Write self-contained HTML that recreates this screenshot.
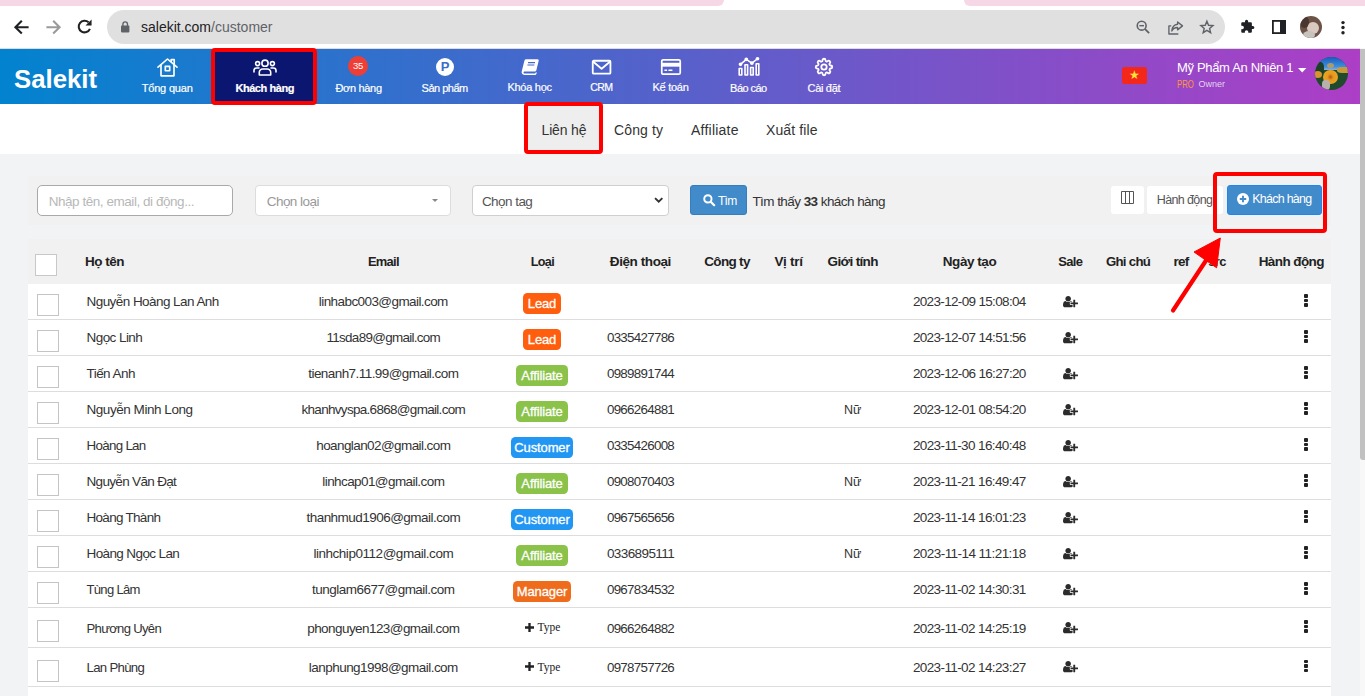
<!DOCTYPE html>
<html lang="vi">
<head>
<meta charset="utf-8">
<title>Salekit - Khách hàng</title>
<style>
*{box-sizing:border-box;margin:0;padding:0}
html,body{width:1365px;height:696px;overflow:hidden;background:#f1f3f5;font-family:"Liberation Sans",sans-serif;color:#222}
.abs{position:absolute}
svg{display:block;position:absolute;overflow:visible}
#tabstrip{left:0;top:0;width:724px;height:6px;background:#f6d7e6;border-radius:0 0 6px 0}
#tabactive{left:964px;top:0;width:401px;height:6px;background:#f6d7e6;border-radius:0 0 0 6px}
#chrome{left:0;top:0;width:1365px;height:49px;background:#fff;border-bottom:1px solid #dedbd8}
#urlpill{left:107px;top:10px;width:1118px;height:34px;border-radius:17px;background:#e0e0e0}
#url{left:141px;top:18px;font-size:14px;line-height:18px;color:#202124;white-space:nowrap}
#url span{color:#5f6368}
#nav{left:0;top:49px;width:1360px;height:55px;background:linear-gradient(90deg,#0283cf 0%,#ad3ec6 100%)}
#sbar{left:1360px;top:48px;width:5px;height:648px;background:#f8f8f8}
#sthumb{left:1360.200px;top:48.500px;width:6px;height:411.500px;background:#c1c1c1;border-radius:0 0 0 3px}
.nl{position:absolute;top:81px;font-size:11px;line-height:14px;color:#fff;white-space:nowrap;transform:translateX(-50%);-webkit-text-stroke:.2px #fff}
#subnav{left:0;top:104px;width:1360px;height:50px;background:#fff}
.st{position:absolute;top:121px;font-size:14px;line-height:18px;color:#333;white-space:nowrap}
.redbox{position:absolute;border:4px solid #ff0000;border-radius:4px}
.panel{position:absolute;left:28px;width:1303px;background:#f1f1f1}
.th{position:absolute;top:252.7px;font-size:13.5px;line-height:18px;font-weight:bold;color:#222;white-space:nowrap;transform:translateX(-50%)}
.row{position:absolute;left:28px;width:1303px;background:#fff;border-bottom:1px solid #ddd}
.cb{position:absolute;left:9px;width:22px;height:22px;border:1px solid #c4c4c4;background:#fff}
.c{position:absolute;font-size:13.5px;line-height:16px;color:#333;white-space:nowrap;transform:translateX(-50%)}
.nm{position:absolute;left:58.5px;font-size:13.5px;line-height:16px;color:#333;white-space:nowrap}
.bd{position:absolute;top:9px;height:20.7px;border-radius:4.5px;color:#fff;font-size:13px;line-height:22.6px;letter-spacing:-.12px;-webkit-text-stroke:.3px #fff;text-align:center;left:514px;transform:translateX(-50%)}
.lead{background:#ff5e0e;width:38px}
.aff{background:#8bc34a;width:52px}
.cus{background:#2196f3;width:62px}
.man{background:#ef6c1c;width:58px}
.ty{position:absolute;left:496.5px;width:40px;height:16px}
.ty svg{left:0;top:3.5px;width:9px;height:9px}
.ty span{position:absolute;left:13px;top:0;font-family:"Liberation Serif",serif;font-size:11.5px;line-height:16px;color:#222}
.upw{position:absolute;left:1034.800px;width:15px;height:13.100px}
.up{left:0;top:0;width:15px;height:13.100px}
.dots{position:absolute;left:1276.300px;width:4px}
.dots i{display:block;width:3.400px;height:3.300px;background:#222;margin-bottom:1.200px;border-radius:.9px}
.ft{font-size:13.5px;line-height:16px;white-space:nowrap}
.ft2{font-size:13.5px;line-height:16px;white-space:nowrap;color:#333}

#f1{letter-spacing:-0.175px}
#f2{letter-spacing:-0.439px}
#f3{letter-spacing:-0.330px}
#f4{letter-spacing:-0.494px}
#f5{letter-spacing:-0.283px}
#f6{letter-spacing:-0.700px;font-size:10.55px!important}
#f7{letter-spacing:-0.256px}
#f8{letter-spacing:-0.545px}
#f9{letter-spacing:-0.310px}
#f10{letter-spacing:-0.331px}
#f11{letter-spacing:-0.156px}
#f12{letter-spacing:0.125px}
#f13{letter-spacing:0.230px}
#f14{letter-spacing:0.113px}
#f15{letter-spacing:-0.454px}
#f16{letter-spacing:-0.531px}
#f17{letter-spacing:-0.544px}
#f18{letter-spacing:-0.700px;font-size:12.08px!important}
#f19{letter-spacing:-0.560px}
#f20{letter-spacing:-0.622px}
#f21{letter-spacing:-0.700px;font-size:12.43px!important}
#f22{letter-spacing:-0.500px}
#f23{letter-spacing:-0.700px;font-size:12.91px!important}
#f24{letter-spacing:-0.700px;font-size:12.61px!important}
#f25{letter-spacing:-0.418px}
#f26{letter-spacing:-0.692px}
#f27{letter-spacing:-0.263px}
#f28{letter-spacing:-0.649px}
#f29{letter-spacing:-0.459px}
#f30{letter-spacing:-0.700px;font-size:12.97px!important}
#f31{letter-spacing:-0.700px;font-size:13.19px!important}
#f32{letter-spacing:-0.700px;font-size:13.47px!important}
#f33{letter-spacing:-0.700px;font-size:12.92px!important}
#f34{letter-spacing:-0.587px}
#f35{letter-spacing:-0.557px}
#f36{letter-spacing:-0.580px}
#f37{letter-spacing:-0.665px}
#f38{letter-spacing:-0.562px}
#f39{letter-spacing:-0.700px;font-size:13.45px!important}
#f40{letter-spacing:-0.700px;font-size:13.33px!important}
#f41{letter-spacing:-0.665px}
#f42{letter-spacing:-0.557px}
#f43{letter-spacing:-0.563px}
#f44{letter-spacing:-0.700px;font-size:13.33px!important}
#f45{letter-spacing:-0.665px}
#f46{letter-spacing:-0.455px}
#f47{letter-spacing:-0.700px;font-size:13.5px!important}
#f48{letter-spacing:-0.700px;font-size:13.33px!important}
#f49{letter-spacing:-0.665px}
#f50{letter-spacing:-0.700px;font-size:13.36px!important}
#f51{letter-spacing:-0.584px}
#f52{letter-spacing:-0.700px;font-size:13.33px!important}
#f53{letter-spacing:-0.609px}
#f54{letter-spacing:-0.675px}
#f55{letter-spacing:-0.579px}
#f56{letter-spacing:-0.700px;font-size:13.33px!important}
#f57{letter-spacing:-0.609px}
#f58{letter-spacing:-0.700px;font-size:13.49px!important}
#f59{letter-spacing:-0.529px}
#f60{letter-spacing:-0.700px;font-size:13.33px!important}
#f61{letter-spacing:-0.609px}
#f62{letter-spacing:-0.611px}
#f63{letter-spacing:-0.463px}
#f64{letter-spacing:-0.587px}
#f65{letter-spacing:-0.554px}
#f66{letter-spacing:-0.700px;font-size:13.08px!important}
#f67{letter-spacing:-0.519px}
#f68{letter-spacing:-0.700px;font-size:13.33px!important}
#f69{letter-spacing:-0.609px}
#f70{letter-spacing:-0.700px;font-size:13.11px!important}
#f71{letter-spacing:-0.565px}
#f72{letter-spacing:-0.700px;font-size:13.33px!important}
#f73{letter-spacing:-0.609px}
#f74{letter-spacing:-0.700px;font-size:13.21px!important}
#f75{letter-spacing:-0.539px}
#f76{letter-spacing:-0.700px;font-size:13.33px!important}
#f77{letter-spacing:-0.609px}
</style>
</head>
<body>
<div class="abs" id="chrome"></div><div class="abs" id="tabstrip"></div><div class="abs" id="tabactive"></div>
<div class="abs" id="urlpill"></div>
<svg style="left:13.5px;top:19.8px;width:15px;height:14.4px" viewBox="0 0 15 14.400" fill="none" stroke="#202124" stroke-width="2.1" stroke-linejoin="miter"><path d="M14.600 7.200H2M7.800 0.800L1.400 7.200L7.800 13.600"/></svg>
<svg style="left:45.800px;top:19.8px;width:15px;height:14.4px" viewBox="0 0 15 14.400" fill="none" stroke="#9a9a9a" stroke-width="2.1"><path d="M.4 7.200H13M7.200 0.800L13.600 7.200L7.200 13.600"/></svg>
<svg style="left:77.200px;top:19.400px;width:15.400px;height:15.400px" viewBox="0 0 15 15" fill="none"><path d="M12.600 9.600A5.700 5.700 0 1 1 11.300 3.200" stroke="#202124" stroke-width="2"/><path d="M14.200 .4V6.300H8.300z" fill="#202124"/></svg>
<svg style="left:120.800px;top:20.600px;width:8.400px;height:11.400px" viewBox="0 0 8.400 11.400"><rect x="0" y="4.600" width="8.400" height="6.800" rx=".8" fill="#5f6368"/><path d="M1.900 5V3.200a2.300 2.300 0 0 1 4.600 0V5" fill="none" stroke="#5f6368" stroke-width="1.400"/></svg>
<!-- zoom -->
<svg style="left:1136.2px;top:20.1px;width:14.2px;height:14.2px" viewBox="0 0 16 16" fill="none" stroke="#5f6368" stroke-width="1.800"><circle cx="6.400" cy="6.400" r="5"/><path d="M10.200 10.200L14.800 14.800" stroke-width="2.100"/><path d="M3.800 6.400H9" stroke-width="1.600"/></svg>
<!-- share -->
<svg style="left:1167.6px;top:20.6px;width:15.4px;height:13.6px" viewBox="0 0 17 15" fill="none" stroke="#5f6368" stroke-width="1.500" stroke-linejoin="round"><path d="M3.6 5.4H1V14.300H11.4"/><path d="M10.600 1L16 5.400L10.600 9.800V7.200C7.400 7.200 5.400 8.400 4.200 11C4.600 7 6.800 4 10.600 3.600z"/></svg>
<!-- star -->
<svg style="left:1200.2px;top:19.8px;width:13.8px;height:13.8px" viewBox="0 0 16 16" fill="none" stroke="#5f6368" stroke-width="1.650" stroke-linejoin="miter"><path d="M8 1.400L9.900 6.100L15 6.500L11.100 9.800L12.300 14.700L8 12.100L3.700 14.700L4.900 9.800L1 6.500L6.100 6.100z"/></svg>
<!-- puzzle -->
<svg style="left:1239.500px;top:19.200px;width:15px;height:15px" viewBox="0 0 24 24"><path d="M20.500 11H19V7c0-1.100-.9-2-2-2h-4V3.500a2.500 2.500 0 0 0-5 0V5H4c-1.100 0-2 .9-2 2v3.800h1.500c1.500 0 2.700 1.200 2.700 2.700S5 16.200 3.500 16.200H2V20c0 1.100.9 2 2 2h3.800v-1.500c0-1.500 1.200-2.700 2.700-2.700s2.700 1.200 2.700 2.700V22H17c1.100 0 2-.9 2-2v-4h1.500a2.500 2.500 0 0 0 0-5z" fill="#202124"/></svg>
<!-- side panel -->
<svg style="left:1272px;top:20px;width:14px;height:14px" viewBox="0 0 14 14"><rect x=".9" y=".9" width="12.200" height="12.200" fill="#fff" stroke="#202124" stroke-width="1.800"/><rect x="8" y="0" width="6" height="14" fill="#202124"/></svg>
<!-- avatar -->
<div class="abs" style="left:1300px;top:15.500px;width:22px;height:22px;border-radius:50%;overflow:hidden;background:#6b5348"><div class="abs" style="left:7px;top:6px;width:12px;height:12px;border-radius:50%;background:#d9c9c0"></div><div class="abs" style="left:3px;top:15px;width:12px;height:8px;border-radius:50%;background:#c9c3bd"></div><div class="abs" style="left:0;top:0;width:9px;height:12px;border-radius:50%;background:#4a3830"></div></div>
<!-- menu -->
<svg style="left:1341.200px;top:19.800px;width:4px;height:15px" viewBox="0 0 4 15" fill="#202124"><circle cx="2" cy="2.6" r="1.700"/><circle cx="2" cy="7.500" r="1.700"/><circle cx="2" cy="12.800" r="1.700"/></svg>

<div class="abs" id="url">salekit.com<span>/customer</span></div>
<div class="abs" id="nav"></div>
<div class="abs" style="left:215px;top:49px;width:98px;height:55px;background:#0b1670"></div>
<svg style="left:14px;top:62px;width:86px;height:30px" viewBox="0 0 86 30"><text id="logo" x="0" y="26.3" font-family="Liberation Sans, sans-serif" font-size="26" font-weight="bold" fill="#fff" textLength="83" lengthAdjust="spacingAndGlyphs">Salekit</text></svg>
<!-- home -->
<svg style="left:156.5px;top:57.5px;width:21px;height:19px" viewBox="0 0 21 19" fill="none" stroke="#fff" stroke-width="1.65" stroke-linejoin="round" stroke-linecap="round"><path d="M1 9.2L10.5 1L20 9.2"/><path d="M4 7.2V17.8H17V7.2"/><path d="M14.2 3.6V1.6H17.2V6.2"/><rect x="8.3" y="8.3" width="4.4" height="4.4"/></svg>
<div id="f1" class="nl" style="left:167.2px">Tổng quan</div>
<!-- people -->
<svg style="left:253px;top:58.5px;width:24px;height:17px" viewBox="0 0 24 17" fill="none" stroke="#fff" stroke-width="1.6" stroke-linecap="round" stroke-linejoin="round"><circle cx="12" cy="4.2" r="3.1"/><circle cx="4.6" cy="4.6" r="2"/><circle cx="19.4" cy="4.6" r="2"/><path d="M6.3 16V13.3a3.3 3.3 0 0 1 3.3-3.3h4.8a3.3 3.3 0 0 1 3.3 3.3V16z"/><path d="M1 13V11.6a2.6 2.6 0 0 1 2.6-2.6H6"/><path d="M23 13V11.6a2.6 2.6 0 0 0-2.6-2.6H18"/></svg>
<div id="f2" class="nl" style="left:264.7px;font-weight:bold">Khách hàng</div>
<!-- orders -->
<div class="abs" style="left:348px;top:56px;width:20px;height:20px;border-radius:50%;background:#ef3e36"></div>
<div class="abs" style="left:348px;top:59.5px;width:20px;text-align:center;font-size:9.5px;line-height:12px;color:#fff;letter-spacing:-.3px">35</div>
<div id="f3" class="nl" style="left:358.6px">Đơn hàng</div>
<!-- product -->
<div class="abs" style="left:436px;top:57.8px;width:18.4px;height:18.4px;border-radius:50%;background:#fff"></div>
<div class="abs" style="left:436px;top:60px;width:18.4px;text-align:center;font-size:13px;line-height:14px;color:#3a6cc9;font-weight:bold">P</div>
<div id="f4" class="nl" style="left:444.7px">Sản phẩm</div>
<!-- course -->
<svg style="left:520.5px;top:58.5px;width:18px;height:16px" viewBox="0 0 18 16"><path d="M5.2 0.3h11.3a1.2 1.2 0 0 1 1.2 1.5L15.3 11.6a1.4 1.4 0 0 1-1.4 1H3.5a1 1 0 0 0 0 2h10.6l.6-1h1.3l-.8 1.7a1.2 1.2 0 0 1-1 .6H3.2A2.6 2.6 0 0 1 .7 12.6L3.4 1.7A1.9 1.9 0 0 1 5.2.3z" fill="#fff"/><path d="M7 3.6h7M6.4 6h7" stroke="#4a67c7" stroke-width="1.1"/></svg>
<div id="f5" class="nl" style="left:529.6px;top:80px">Khóa học</div>
<!-- crm -->
<svg style="left:591.7px;top:59.8px;width:19.2px;height:14.6px" viewBox="0 0 20 15" preserveAspectRatio="none" fill="none" stroke="#fff" stroke-width="1.9" stroke-linejoin="round"><rect x=".8" y=".8" width="18.4" height="13.2" rx="1"/><path d="M1 1.5L10 9L19 1.5"/></svg>
<div id="f6" class="nl" style="left:601.3px;top:80px">CRM</div>
<!-- accounting -->
<svg style="left:660.6px;top:58.5px;width:20px;height:16px" viewBox="0 0 21 16.5" preserveAspectRatio="none" fill="none" stroke="#fff"><rect x=".8" y=".8" width="19.4" height="14.9" rx="1.6" stroke-width="1.8"/><path d="M1 5.9H20" stroke-width="4"/><path d="M3.6 11.6H6.4M7.8 11.6H12" stroke-width="1.7"/></svg>
<div id="f7" class="nl" style="left:670.5px;top:80px">Kế toán</div>
<!-- report -->
<svg style="left:737.5px;top:57.4px;width:22px;height:18.8px" viewBox="0 0 22 19.5" preserveAspectRatio="none" fill="none" stroke="#fff" stroke-width="1.6" stroke-linejoin="round"><rect x="1.2" y="12" width="2.6" height="6.6"/><rect x="7" y="8" width="2.6" height="10.6"/><rect x="12.6" y="11" width="2.6" height="7.6"/><rect x="18.2" y="7" width="2.6" height="11.6"/><path d="M2.5 7.6L8.3 2.4L13.9 6.4L19.5 1.8"/><circle cx="2.5" cy="7.6" r="1.1" fill="#fff"/><circle cx="8.3" cy="2.4" r="1.1" fill="#fff"/><circle cx="13.9" cy="6.4" r="1.1" fill="#fff"/><circle cx="19.5" cy="1.8" r="1.1" fill="#fff"/></svg>
<div id="f8" class="nl" style="left:748.4px">Báo cáo</div>
<!-- settings -->
<svg style="left:815px;top:57.9px;width:18px;height:18px" viewBox="0 0 24 24" fill="none" stroke="#fff" stroke-width="2.4" stroke-linejoin="round"><circle cx="12" cy="12" r="3.6"/><path d="M19.4 15a1.65 1.65 0 0 0 .33 1.82l.06.06a2 2 0 0 1-2.83 2.83l-.06-.06a1.65 1.65 0 0 0-1.82-.33 1.65 1.65 0 0 0-1 1.51V21a2 2 0 0 1-4 0v-.09A1.65 1.65 0 0 0 9 19.4a1.65 1.65 0 0 0-1.820.33l-.06.06a2 2 0 0 1-2.83-2.83l.06-.06a1.65 1.65 0 0 0 .33-1.82 1.65 1.65 0 0 0-1.510-1H3a2 2 0 0 1 0-4h.09A1.65 1.65 0 0 0 4.600 9a1.65 1.65 0 0 0-.33-1.820l-.06-.06a2 2 0 0 1 2.83-2.83l.06.06a1.65 1.65 0 0 0 1.82.33H9a1.65 1.65 0 0 0 1-1.510V3a2 2 0 0 1 4 0v.09a1.65 1.65 0 0 0 1 1.510 1.65 1.65 0 0 0 1.820-.33l.06-.06a2 2 0 0 1 2.83 2.83l-.06.06a1.65 1.65 0 0 0-.33 1.82V9a1.65 1.65 0 0 0 1.510 1H21a2 2 0 0 1 0 4h-.09a1.650 1.650 0 0 0-1.510 1z"/></svg>
<div id="f9" class="nl" style="left:823.9px">Cài đặt</div>
<!-- right -->
<div class="abs" style="left:1122px;top:67px;width:25px;height:17px;border-radius:2.5px;background:#f3281b"></div>
<div class="abs" style="left:1122px;top:67px;width:25px;height:17px;text-align:center;font-size:12px;line-height:17px;color:#ffe23a">★</div>
<div id="f10" class="abs" style="left:1177px;top:60px;font-size:13px;line-height:16px;color:#fff;white-space:nowrap">Mỹ Phẩm An Nhiên 1</div>
<svg style="left:1298px;top:68px;width:8.4px;height:4.4px" viewBox="0 0 8.4 4.4"><path d="M0 0h8.400L4.200 4.400z" fill="#fff"/></svg>
<div class="abs" style="left:1177px;top:80.400px;font-size:10.200px;line-height:10px;color:#ff9838;white-space:nowrap;transform:scaleX(.76);transform-origin:0 0">PRO</div>
<div class="abs" style="left:1198.5px;top:78.5px;font-size:9px;line-height:10px;color:#e2d3f1;white-space:nowrap">Owner</div>
<div class="abs" style="left:1315px;top:57px;width:33px;height:33px;border-radius:50%;overflow:hidden;background:#1f4a2c"><div class="abs" style="left:0;top:0;width:33px;height:13px;background:linear-gradient(180deg,#1a5cba,#3d8ee0 75%,#8fb4d4)"></div><div class="abs" style="left:0;top:5px;width:9px;height:12px;border-radius:40%;background:#1c3f2a"></div><div class="abs" style="left:22px;top:9.500px;width:12px;height:6px;border-radius:40% 0 0 40%;background:#c99a3c"></div><div class="abs" style="left:-2px;top:13.500px;width:9px;height:7px;border-radius:50%;background:#d9952a"></div><div class="abs" style="left:12px;top:6px;width:7px;height:5px;border-radius:50%;background:#c9a050;opacity:.8"></div><div class="abs" style="left:8px;top:12.500px;width:15px;height:14.500px;border-radius:50%;background:radial-gradient(circle,#b5531a 0%,#e59a1e 30%,#eba423 70%,#c98a20 100%)"></div><div class="abs" style="left:6.500px;top:23px;width:8px;height:10px;border-radius:40%;background:#b9b0ad"></div></div>

<div class="abs" id="sbar"></div><div class="abs" id="sthumb"></div>
<div class="abs" id="subnav"></div>
<div class="abs" style="left:528px;top:104px;width:72px;height:50px;background:#eeeeee"></div>
<div id="f11" class="st" style="left:541.5px">Liên hệ</div>
<div id="f12" class="st" style="left:614px">Công ty</div>
<div id="f13" class="st" style="left:691px">Affiliate</div>
<div id="f14" class="st" style="left:766px">Xuất file</div>

<div class="panel" style="top:176px;height:49px"></div>
<div class="panel" style="top:239px;height:45px"></div>
<div class="abs" style="left:37px;top:185px;width:196px;height:31px;border:1px solid #a9a9a9;border-radius:5px;background:#fff"></div>
<div id="f15" class="abs ft" style="left:48.7px;top:194px;color:#b8b8b8">Nhập tên, email, di động...</div>
<div class="abs" style="left:255px;top:185px;width:196px;height:31px;border:1px solid #dcdcdc;border-radius:4px;background:#fff"></div>
<div id="f16" class="abs ft" style="left:266.7px;top:194px;color:#999">Chọn loại</div>
<svg style="left:432px;top:199px;width:6px;height:3px" viewBox="0 0 6 3"><path d="M0 0h6L3 3z" fill="#888"/></svg>
<div class="abs" style="left:472px;top:185px;width:197px;height:31px;border:1px solid #cfcfcf;border-radius:4px;background:#fff"></div>
<div id="f17" class="abs ft" style="left:481.9px;top:194px;color:#555">Chọn tag</div>
<svg style="left:654.3px;top:197px;width:9.4px;height:6.4px" viewBox="0 0 9 6"><path d="M1 1l3.5 3.5L8 1" fill="none" stroke="#333" stroke-width="1.8"/></svg>
<div class="abs" style="left:690px;top:185px;width:57px;height:30px;border:1px solid #357ebd;border-radius:3px;background:#428bca"></div>
<svg style="left:703.3px;top:194.2px;width:12.2px;height:12.2px" viewBox="0 0 12 12"><circle cx="4.8" cy="4.8" r="3.6" fill="none" stroke="#fff" stroke-width="1.9"/><path d="M7.6 7.6l3.4 3.4" stroke="#fff" stroke-width="2.2" stroke-linecap="round"/></svg>
<div id="f18" class="abs" style="left:717.9px;top:192.6px;font-size:13px;line-height:16px;color:#fff;white-space:nowrap">Tìm</div>
<div id="f19" class="abs ft2" style="left:752.4px;top:194px">Tìm thấy <b>33</b> khách hàng</div>
<div class="abs" style="left:1111px;top:186px;width:33px;height:28px;border-radius:3px;background:#fff"></div>
<svg style="left:1121px;top:191px;width:13px;height:13px" viewBox="0 0 13 13"><path d="M.5.5h12v12H.5zM4.5.5v12M8.5.5v12" fill="none" stroke="#555" stroke-width="1"/></svg>
<div class="abs" style="left:1147px;top:186px;width:76px;height:28px;border-radius:3px;background:#fff"></div>
<div id="f20" class="abs" style="left:1156.8px;top:191.8px;font-size:12.5px;line-height:16px;color:#555;white-space:nowrap">Hành động</div>
<div class="abs" style="left:1227px;top:185px;width:95px;height:30px;border:1px solid #1c86f6;border-radius:3px;background:#428bca"></div>
<svg style="left:1236.5px;top:193.1px;width:12px;height:12px" viewBox="0 0 12 12"><circle cx="6" cy="6" r="6" fill="#fff"/><path d="M6 2.8v6.4M2.8 6h6.4" stroke="#428bca" stroke-width="1.9"/></svg>
<div id="f21" class="abs" style="left:1252.2px;top:191.4px;font-size:13px;line-height:16px;color:#fff;white-space:nowrap">Khách hàng</div>

<div class="abs" style="left:35px;top:254px;width:22px;height:22px;border:1px solid #c8c8c8;background:#fff"></div>
<div id="f22" class="th" style="left:85px;transform:none">Họ tên</div>
<div id="f23" class="th" style="left:383.4px">Email</div>
<div id="f24" class="th" style="left:542.4px">Loại</div>
<div id="f25" class="th" style="left:640.4px">Điện thoại</div>
<div id="f26" class="th" style="left:727px">Công ty</div>
<div id="f27" class="th" style="left:788.6px">Vị trí</div>
<div id="f28" class="th" style="left:852.7px">Giới tính</div>
<div id="f29" class="th" style="left:969.5px">Ngày tạo</div>
<div id="f30" class="th" style="left:1070.3px">Sale</div>
<div id="f31" class="th" style="left:1128px">Ghi chú</div>
<div id="f32" class="th" style="left:1181px">ref</div>
<div id="f33" class="th" style="left:1217px">src</div>
<div id="f34" class="th" style="left:1291.3px">Hành động</div>

<div class="row" style="top:284px;height:36px"><div class="cb" style="top:10px"></div><div id="f35" class="nm" style="top:9.8px">Nguyễn Hoàng Lan Anh</div><div id="f36" class="c em" style="left:355.3px;top:9.8px">linhabc003@gmail.com</div><div class="bd lead">Lead</div><div id="f37" class="c dt" style="left:941.3px;top:9.8px">2023-12-09 15:08:04</div><div class="upw" style="top:10.5px"><svg class="up" viewBox="0 0 2048 1792"><path fill="#2b2b2b" d="M704 896q-159 0-271.500-112.500t-112.500-271.500 112.500-271.500 271.500-112.500 271.500 112.500 112.500 271.500-112.500 271.500-271.500 112.500zM1664 1024h352q13 0 22.500 9.500t9.500 22.500v192q0 13-9.500 22.500t-22.500 9.500h-352v352q0 13-9.500 22.500t-22.500 9.500h-192q-13 0-22.500-9.500t-9.500-22.500v-352h-352q-13 0-22.500-9.500t-9.500-22.500v-192q0-13 9.500-22.500t22.500-9.500h352v-352q0-13 9.500-22.500t22.500-9.500h192q13 0 22.500 9.500t9.500 22.500v352zM928 1248q0 52 38 90t90 38h256v238q-68 50-171 50h-874q-121 0-194-69t-73-190q0-53 3.500-103.500t14-109 26.500-108.500 43-97.500 62-81 85.500-53.500 111.500-20q19 0 39 17 79 61 154.500 91.500t164.500 30.500 164.500-30.500 154.500-91.500q20-17 39-17 132 0 217 96h-223q-52 0-90 38t-38 90v192z"/></svg></div><div class="dots" style="top:10.3px"><i></i><i></i><i></i></div></div>
<div class="row" style="top:320px;height:36px"><div class="cb" style="top:10px"></div><div id="f38" class="nm" style="top:9.8px">Ngọc Linh</div><div id="f39" class="c em" style="left:355.3px;top:9.8px">11sda89@gmail.com</div><div class="bd lead">Lead</div><div id="f40" class="c ph" style="left:612.5px;top:9.8px">0335427786</div><div id="f41" class="c dt" style="left:941.3px;top:9.8px">2023-12-07 14:51:56</div><div class="upw" style="top:10.5px"><svg class="up" viewBox="0 0 2048 1792"><path fill="#2b2b2b" d="M704 896q-159 0-271.500-112.500t-112.500-271.500 112.500-271.500 271.500-112.500 271.500 112.500 112.500 271.500-112.500 271.500-271.500 112.500zM1664 1024h352q13 0 22.500 9.500t9.500 22.500v192q0 13-9.500 22.500t-22.500 9.500h-352v352q0 13-9.500 22.500t-22.500 9.500h-192q-13 0-22.500-9.500t-9.500-22.500v-352h-352q-13 0-22.500-9.500t-9.500-22.500v-192q0-13 9.500-22.500t22.500-9.500h352v-352q0-13 9.500-22.500t22.500-9.500h192q13 0 22.500 9.500t9.500 22.500v352zM928 1248q0 52 38 90t90 38h256v238q-68 50-171 50h-874q-121 0-194-69t-73-190q0-53 3.500-103.500t14-109 26.500-108.500 43-97.500 62-81 85.500-53.500 111.500-20q19 0 39 17 79 61 154.500 91.500t164.500 30.500 164.500-30.500 154.500-91.500q20-17 39-17 132 0 217 96h-223q-52 0-90 38t-38 90v192z"/></svg></div><div class="dots" style="top:10.3px"><i></i><i></i><i></i></div></div>
<div class="row" style="top:356px;height:36px"><div class="cb" style="top:10px"></div><div id="f42" class="nm" style="top:9.8px">Tiến Anh</div><div id="f43" class="c em" style="left:355.3px;top:9.8px">tienanh7.11.99@gmail.com</div><div class="bd aff">Affiliate</div><div id="f44" class="c ph" style="left:612.5px;top:9.8px">0989891744</div><div id="f45" class="c dt" style="left:941.3px;top:9.8px">2023-12-06 16:27:20</div><div class="upw" style="top:10.5px"><svg class="up" viewBox="0 0 2048 1792"><path fill="#2b2b2b" d="M704 896q-159 0-271.500-112.500t-112.500-271.500 112.500-271.500 271.500-112.500 271.500 112.500 112.500 271.500-112.500 271.500-271.500 112.500zM1664 1024h352q13 0 22.500 9.500t9.500 22.500v192q0 13-9.500 22.500t-22.500 9.500h-352v352q0 13-9.500 22.500t-22.500 9.500h-192q-13 0-22.500-9.500t-9.500-22.500v-352h-352q-13 0-22.500-9.500t-9.500-22.500v-192q0-13 9.500-22.500t22.500-9.500h352v-352q0-13 9.500-22.500t22.500-9.500h192q13 0 22.500 9.500t9.500 22.500v352zM928 1248q0 52 38 90t90 38h256v238q-68 50-171 50h-874q-121 0-194-69t-73-190q0-53 3.500-103.500t14-109 26.500-108.500 43-97.500 62-81 85.500-53.500 111.500-20q19 0 39 17 79 61 154.500 91.500t164.500 30.500 164.500-30.500 154.500-91.500q20-17 39-17 132 0 217 96h-223q-52 0-90 38t-38 90v192z"/></svg></div><div class="dots" style="top:10.3px"><i></i><i></i><i></i></div></div>
<div class="row" style="top:392px;height:36px"><div class="cb" style="top:10px"></div><div id="f46" class="nm" style="top:9.8px">Nguyễn Minh Long</div><div id="f47" class="c em" style="left:355.3px;top:9.8px">khanhvyspa.6868@gmail.com</div><div class="bd aff">Affiliate</div><div id="f48" class="c ph" style="left:612.5px;top:9.8px">0966264881</div><div class="c" style="font-size:12.5px;left:824.8px;top:9.8px">Nữ</div><div id="f49" class="c dt" style="left:941.3px;top:9.8px">2023-12-01 08:54:20</div><div class="upw" style="top:10.5px"><svg class="up" viewBox="0 0 2048 1792"><path fill="#2b2b2b" d="M704 896q-159 0-271.500-112.500t-112.500-271.500 112.500-271.500 271.500-112.500 271.500 112.500 112.500 271.500-112.500 271.500-271.500 112.500zM1664 1024h352q13 0 22.500 9.500t9.500 22.500v192q0 13-9.500 22.500t-22.500 9.500h-352v352q0 13-9.500 22.500t-22.500 9.500h-192q-13 0-22.500-9.500t-9.500-22.500v-352h-352q-13 0-22.500-9.500t-9.500-22.500v-192q0-13 9.500-22.500t22.500-9.500h352v-352q0-13 9.500-22.500t22.500-9.500h192q13 0 22.500 9.500t9.500 22.500v352zM928 1248q0 52 38 90t90 38h256v238q-68 50-171 50h-874q-121 0-194-69t-73-190q0-53 3.500-103.500t14-109 26.500-108.500 43-97.500 62-81 85.500-53.500 111.500-20q19 0 39 17 79 61 154.500 91.500t164.500 30.500 164.500-30.500 154.500-91.500q20-17 39-17 132 0 217 96h-223q-52 0-90 38t-38 90v192z"/></svg></div><div class="dots" style="top:10.3px"><i></i><i></i><i></i></div></div>
<div class="row" style="top:428px;height:36px"><div class="cb" style="top:10px"></div><div id="f50" class="nm" style="top:9.8px">Hoàng Lan</div><div id="f51" class="c em" style="left:355.3px;top:9.8px">hoanglan02@gmail.com</div><div class="bd cus">Customer</div><div id="f52" class="c ph" style="left:612.5px;top:9.8px">0335426008</div><div id="f53" class="c dt" style="left:941.3px;top:9.8px">2023-11-30 16:40:48</div><div class="upw" style="top:10.5px"><svg class="up" viewBox="0 0 2048 1792"><path fill="#2b2b2b" d="M704 896q-159 0-271.500-112.500t-112.500-271.500 112.500-271.500 271.500-112.500 271.500 112.500 112.500 271.500-112.500 271.500-271.500 112.500zM1664 1024h352q13 0 22.500 9.500t9.500 22.500v192q0 13-9.500 22.500t-22.500 9.500h-352v352q0 13-9.500 22.500t-22.500 9.500h-192q-13 0-22.500-9.500t-9.500-22.500v-352h-352q-13 0-22.500-9.500t-9.500-22.500v-192q0-13 9.500-22.500t22.500-9.500h352v-352q0-13 9.500-22.500t22.500-9.500h192q13 0 22.500 9.500t9.500 22.500v352zM928 1248q0 52 38 90t90 38h256v238q-68 50-171 50h-874q-121 0-194-69t-73-190q0-53 3.500-103.500t14-109 26.500-108.500 43-97.500 62-81 85.500-53.500 111.500-20q19 0 39 17 79 61 154.500 91.500t164.500 30.500 164.500-30.500 154.500-91.500q20-17 39-17 132 0 217 96h-223q-52 0-90 38t-38 90v192z"/></svg></div><div class="dots" style="top:10.3px"><i></i><i></i><i></i></div></div>
<div class="row" style="top:464px;height:36px"><div class="cb" style="top:10px"></div><div id="f54" class="nm" style="top:9.8px">Nguyễn Văn Đạt</div><div id="f55" class="c em" style="left:355.3px;top:9.8px">linhcap01@gmail.com</div><div class="bd aff">Affiliate</div><div id="f56" class="c ph" style="left:612.5px;top:9.8px">0908070403</div><div class="c" style="font-size:12.5px;left:824.8px;top:9.8px">Nữ</div><div id="f57" class="c dt" style="left:941.3px;top:9.8px">2023-11-21 16:49:47</div><div class="upw" style="top:10.5px"><svg class="up" viewBox="0 0 2048 1792"><path fill="#2b2b2b" d="M704 896q-159 0-271.500-112.500t-112.500-271.500 112.500-271.500 271.500-112.500 271.500 112.500 112.500 271.500-112.500 271.500-271.500 112.500zM1664 1024h352q13 0 22.500 9.500t9.500 22.500v192q0 13-9.500 22.500t-22.500 9.500h-352v352q0 13-9.500 22.500t-22.500 9.500h-192q-13 0-22.500-9.500t-9.500-22.500v-352h-352q-13 0-22.500-9.500t-9.500-22.500v-192q0-13 9.500-22.500t22.500-9.500h352v-352q0-13 9.500-22.500t22.500-9.500h192q13 0 22.500 9.500t9.500 22.500v352zM928 1248q0 52 38 90t90 38h256v238q-68 50-171 50h-874q-121 0-194-69t-73-190q0-53 3.500-103.500t14-109 26.500-108.500 43-97.500 62-81 85.500-53.500 111.500-20q19 0 39 17 79 61 154.500 91.500t164.500 30.500 164.500-30.500 154.500-91.500q20-17 39-17 132 0 217 96h-223q-52 0-90 38t-38 90v192z"/></svg></div><div class="dots" style="top:10.3px"><i></i><i></i><i></i></div></div>
<div class="row" style="top:500px;height:36px"><div class="cb" style="top:10px"></div><div id="f58" class="nm" style="top:9.8px">Hoàng Thành</div><div id="f59" class="c em" style="left:355.3px;top:9.8px">thanhmud1906@gmail.com</div><div class="bd cus">Customer</div><div id="f60" class="c ph" style="left:612.5px;top:9.8px">0967565656</div><div id="f61" class="c dt" style="left:941.3px;top:9.8px">2023-11-14 16:01:23</div><div class="upw" style="top:10.5px"><svg class="up" viewBox="0 0 2048 1792"><path fill="#2b2b2b" d="M704 896q-159 0-271.500-112.500t-112.500-271.500 112.500-271.500 271.500-112.500 271.500 112.500 112.500 271.500-112.500 271.500-271.500 112.500zM1664 1024h352q13 0 22.500 9.500t9.500 22.500v192q0 13-9.500 22.500t-22.500 9.500h-352v352q0 13-9.500 22.500t-22.500 9.500h-192q-13 0-22.500-9.500t-9.500-22.500v-352h-352q-13 0-22.500-9.500t-9.500-22.500v-192q0-13 9.500-22.500t22.500-9.500h352v-352q0-13 9.500-22.500t22.500-9.500h192q13 0 22.500 9.500t9.500 22.500v352zM928 1248q0 52 38 90t90 38h256v238q-68 50-171 50h-874q-121 0-194-69t-73-190q0-53 3.500-103.500t14-109 26.500-108.500 43-97.500 62-81 85.500-53.500 111.500-20q19 0 39 17 79 61 154.500 91.500t164.500 30.500 164.500-30.500 154.500-91.500q20-17 39-17 132 0 217 96h-223q-52 0-90 38t-38 90v192z"/></svg></div><div class="dots" style="top:10.3px"><i></i><i></i><i></i></div></div>
<div class="row" style="top:536px;height:36px"><div class="cb" style="top:10px"></div><div id="f62" class="nm" style="top:9.8px">Hoàng Ngọc Lan</div><div id="f63" class="c em" style="left:355.3px;top:9.8px">linhchip0112@gmail.com</div><div class="bd aff">Affiliate</div><div id="f64" class="c ph" style="left:612.5px;top:9.8px">0336895111</div><div class="c" style="font-size:12.5px;left:824.8px;top:9.8px">Nữ</div><div id="f65" class="c dt" style="left:941.3px;top:9.8px">2023-11-14 11:21:18</div><div class="upw" style="top:10.5px"><svg class="up" viewBox="0 0 2048 1792"><path fill="#2b2b2b" d="M704 896q-159 0-271.500-112.500t-112.500-271.500 112.500-271.500 271.500-112.500 271.500 112.500 112.500 271.500-112.500 271.500-271.500 112.500zM1664 1024h352q13 0 22.500 9.500t9.500 22.500v192q0 13-9.500 22.500t-22.500 9.500h-352v352q0 13-9.500 22.500t-22.500 9.500h-192q-13 0-22.500-9.500t-9.500-22.500v-352h-352q-13 0-22.500-9.500t-9.500-22.500v-192q0-13 9.500-22.500t22.500-9.500h352v-352q0-13 9.500-22.500t22.500-9.500h192q13 0 22.500 9.500t9.500 22.500v352zM928 1248q0 52 38 90t90 38h256v238q-68 50-171 50h-874q-121 0-194-69t-73-190q0-53 3.500-103.500t14-109 26.500-108.500 43-97.500 62-81 85.500-53.500 111.500-20q19 0 39 17 79 61 154.500 91.500t164.500 30.500 164.500-30.500 154.500-91.500q20-17 39-17 132 0 217 96h-223q-52 0-90 38t-38 90v192z"/></svg></div><div class="dots" style="top:10.3px"><i></i><i></i><i></i></div></div>
<div class="row" style="top:572px;height:36px"><div class="cb" style="top:10px"></div><div id="f66" class="nm" style="top:9.8px">Tùng Lâm</div><div id="f67" class="c em" style="left:355.3px;top:9.8px">tunglam6677@gmail.com</div><div class="bd man">Manager</div><div id="f68" class="c ph" style="left:612.5px;top:9.8px">0967834532</div><div id="f69" class="c dt" style="left:941.3px;top:9.8px">2023-11-02 14:30:31</div><div class="upw" style="top:10.5px"><svg class="up" viewBox="0 0 2048 1792"><path fill="#2b2b2b" d="M704 896q-159 0-271.500-112.500t-112.500-271.500 112.500-271.500 271.500-112.500 271.500 112.500 112.500 271.500-112.500 271.500-271.500 112.500zM1664 1024h352q13 0 22.500 9.500t9.500 22.500v192q0 13-9.500 22.500t-22.500 9.500h-352v352q0 13-9.500 22.500t-22.500 9.500h-192q-13 0-22.500-9.500t-9.500-22.500v-352h-352q-13 0-22.500-9.500t-9.500-22.500v-192q0-13 9.500-22.500t22.500-9.500h352v-352q0-13 9.500-22.500t22.500-9.500h192q13 0 22.500 9.500t9.500 22.500v352zM928 1248q0 52 38 90t90 38h256v238q-68 50-171 50h-874q-121 0-194-69t-73-190q0-53 3.500-103.500t14-109 26.500-108.500 43-97.500 62-81 85.500-53.500 111.500-20q19 0 39 17 79 61 154.500 91.500t164.500 30.500 164.500-30.500 154.500-91.500q20-17 39-17 132 0 217 96h-223q-52 0-90 38t-38 90v192z"/></svg></div><div class="dots" style="top:10.3px"><i></i><i></i><i></i></div></div>
<div class="row" style="top:608px;height:40px"><div class="cb" style="top:12px"></div><div id="f70" class="nm" style="top:12.7px">Phương Uyên</div><div id="f71" class="c em" style="left:355.3px;top:12.7px">phonguyen123@gmail.com</div><div class="ty" style="top:11px"><svg viewBox="0 0 10 10"><path d="M3.700 0h2.600v3.700H10v2.600H6.300V10H3.700V6.300H0V3.700h3.700z" fill="#222"/></svg><span>Type</span></div><div id="f72" class="c ph" style="left:612.5px;top:12.7px">0966264882</div><div id="f73" class="c dt" style="left:941.3px;top:12.7px">2023-11-02 14:25:19</div><div class="upw" style="top:12.5px"><svg class="up" viewBox="0 0 2048 1792"><path fill="#2b2b2b" d="M704 896q-159 0-271.500-112.500t-112.500-271.500 112.500-271.500 271.500-112.500 271.500 112.500 112.500 271.500-112.500 271.500-271.500 112.500zM1664 1024h352q13 0 22.500 9.500t9.500 22.500v192q0 13-9.500 22.500t-22.500 9.500h-352v352q0 13-9.500 22.500t-22.500 9.500h-192q-13 0-22.500-9.500t-9.500-22.500v-352h-352q-13 0-22.500-9.500t-9.500-22.500v-192q0-13 9.500-22.500t22.500-9.500h352v-352q0-13 9.500-22.500t22.500-9.500h192q13 0 22.500 9.500t9.500 22.500v352zM928 1248q0 52 38 90t90 38h256v238q-68 50-171 50h-874q-121 0-194-69t-73-190q0-53 3.500-103.500t14-109 26.500-108.500 43-97.500 62-81 85.500-53.500 111.500-20q19 0 39 17 79 61 154.500 91.500t164.500 30.500 164.500-30.500 154.500-91.500q20-17 39-17 132 0 217 96h-223q-52 0-90 38t-38 90v192z"/></svg></div><div class="dots" style="top:12.3px"><i></i><i></i><i></i></div></div>
<div class="row" style="top:648px;height:39px"><div class="cb" style="top:11.5px"></div><div id="f74" class="nm" style="top:12.2px">Lan Phùng</div><div id="f75" class="c em" style="left:355.3px;top:12.2px">lanphung1998@gmail.com</div><div class="ty" style="top:10.5px"><svg viewBox="0 0 10 10"><path d="M3.700 0h2.600v3.700H10v2.600H6.300V10H3.700V6.300H0V3.700h3.700z" fill="#222"/></svg><span>Type</span></div><div id="f76" class="c ph" style="left:612.5px;top:12.2px">0978757726</div><div id="f77" class="c dt" style="left:941.3px;top:12.2px">2023-11-02 14:23:27</div><div class="upw" style="top:12px"><svg class="up" viewBox="0 0 2048 1792"><path fill="#2b2b2b" d="M704 896q-159 0-271.500-112.500t-112.500-271.500 112.500-271.500 271.500-112.500 271.500 112.500 112.500 271.500-112.500 271.500-271.500 112.500zM1664 1024h352q13 0 22.500 9.500t9.500 22.500v192q0 13-9.500 22.500t-22.500 9.500h-352v352q0 13-9.500 22.500t-22.500 9.500h-192q-13 0-22.500-9.500t-9.500-22.500v-352h-352q-13 0-22.500-9.500t-9.500-22.500v-192q0-13 9.500-22.500t22.500-9.500h352v-352q0-13 9.500-22.500t22.500-9.500h192q13 0 22.500 9.500t9.500 22.500v352zM928 1248q0 52 38 90t90 38h256v238q-68 50-171 50h-874q-121 0-194-69t-73-190q0-53 3.500-103.500t14-109 26.500-108.500 43-97.500 62-81 85.500-53.500 111.500-20q19 0 39 17 79 61 154.500 91.500t164.500 30.500 164.500-30.500 154.500-91.500q20-17 39-17 132 0 217 96h-223q-52 0-90 38t-38 90v192z"/></svg></div><div class="dots" style="top:11.8px"><i></i><i></i><i></i></div></div>
<div class="row" style="top:687px;height:20px;border:0"></div>
<div class="redbox" style="left:211px;top:48px;width:106px;height:57px"></div>
<div class="redbox" style="left:524px;top:102px;width:79px;height:52px"></div>
<div class="redbox" style="left:1213px;top:172px;width:114px;height:61px"></div>
<svg style="left:1150px;top:225px;width:100px;height:100px" viewBox="1150 225 100 100"><path d="M1173 310.5L1207 259" stroke="#ff0000" stroke-width="4.2" stroke-linecap="round" fill="none"/><path d="M1220.3 238L1194 252L1216.6 267.8z" fill="#ff0000" stroke="#ff0000" stroke-width="1" stroke-linejoin="round"/></svg>

</body>
</html>
